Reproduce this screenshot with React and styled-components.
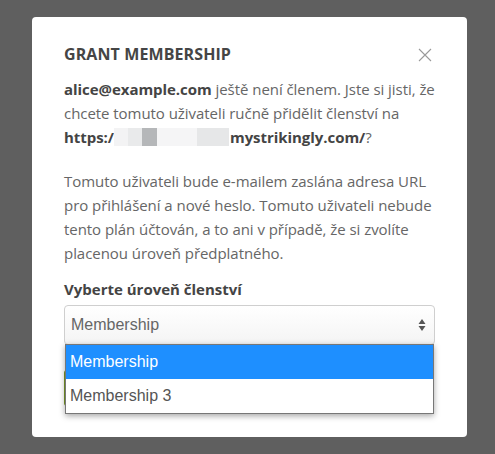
import React, { Component } from 'react';
import styled, { createGlobalStyle } from 'styled-components';

const GlobalStyle = createGlobalStyle`
  html, body {
    margin: 0;
    padding: 0;
    background: #5f5f5f;
  }
  body {
    font-family: "Open Sans", "Liberation Sans", sans-serif;
  }
`

class App extends Component {
  state = {
    options: [
      {id: 1, value: "Membership"},
      {id: 2, value: "Membership 3"}
    ],
    selected: "Membership"
  }

  render() {
    let {options, selected} = this.state

    return (
      <>
        <GlobalStyle />
        <Overlay>
          <Modal>
            <Header>
              <Title>Grant Membership</Title>
              <Close aria-label="close">
                <svg width="14" height="14" viewBox="0 0 14 14">
                  <path d="M1 1 L13 13 M13 1 L1 13" stroke="#9a9a9a" strokeWidth="1.1" fill="none" />
                </svg>
              </Close>
            </Header>
            <Text space={20}>
              <b>alice@example.com</b> ještě není členem. Jste si jisti, že chcete tomuto uživateli ručně přidělit členství na{' '}
              <b>https:/<Blur><i /><i /><i /><i /><i /></Blur>mystrikingly.com/</b>?
            </Text>
            <Text space={12}>
              Tomuto uživateli bude e-mailem zaslána adresa URL pro přihlášení a nové heslo. Tomuto uživateli nebude tento plán účtován, a to ani v případě, že si zvolíte placenou úroveň předplatného.
            </Text>
            <Label>Vyberte úroveň členství</Label>
            <Field>
              <Select>
                <span>{selected}</span>
                <Arrows>
                  <svg width="8" height="14" viewBox="0 0 8 14">
                    <path d="M4 1 L7.5 6 L0.5 6 Z M4 13 L7.5 8 L0.5 8 Z" fill="#555" />
                  </svg>
                </Arrows>
              </Select>
              <Button />
              <Menu>
                {
                  options.map(option => (
                    <Option key={option.id} active={option.value === selected}>{option.value}</Option>
                  ))
                }
              </Menu>
            </Field>
          </Modal>
        </Overlay>
      </>
    );
  }
}

const Overlay = styled.div`
  width: 495px;
  height: 454px;
  padding: 17px 28px 0 32px;
  box-sizing: border-box;
  overflow: hidden;
`

const Modal = styled.div`
  width: 435px;
  height: 420px;
  background: #fff;
  border-radius: 4px;
  padding: 25px 32px 0 32px;
  box-sizing: border-box;
`

const Header = styled.div`
  display: flex;
  justify-content: space-between;
  align-items: center;
  height: 24px;
  margin-bottom: 11px;
`

const Title = styled.h3`
  margin: 0;
  font-size: 16px;
  font-weight: 700;
  text-transform: uppercase;
  color: #454545;
  letter-spacing: 0.1px;
`

const Close = styled.div`
  display: flex;
  width: 14px;
  height: 14px;
  margin-right: 3px;
  margin-top: 2px;
`

const Text = styled.p`
  margin: 0 0 ${props => props.space}px 0;
  font-size: 15px;
  line-height: 24px;
  color: #666;
  letter-spacing: -0.05px;

  b {
    color: #444;
    font-weight: 700;
  }
`

const Blur = styled.span`
  display: inline-flex;
  vertical-align: -3px;
  height: 18px;
  margin: 0 1px 0 0;

  i {
    display: block;
    width: 14px;
    height: 18px;
    background: #f3f3f4;
  }
  i:nth-child(2) { background: #e9eaeb; width: 14px; }
  i:nth-child(3) { background: #b5b7b9; width: 15px; }
  i:nth-child(4) { background: #f5f5f6; width: 40px; }
  i:nth-child(5) { background: #e6e7e8; width: 32px; }
`

const Label = styled.div`
  font-size: 15px;
  font-weight: 700;
  color: #444;
  line-height: 24px;
  margin-bottom: 4px;
`

const Field = styled.div`
  position: relative;
`

const Select = styled.div`
  display: flex;
  align-items: center;
  justify-content: space-between;
  height: 40px;
  box-sizing: border-box;
  border: 1px solid #cfcfcf;
  border-radius: 4px;
  padding: 0 8px 0 6px;
  background: linear-gradient(#fff, #f4f4f4);
  font-family: "Liberation Sans", Arial, sans-serif;
  font-size: 16px;
  color: #666;
`

const Arrows = styled.span`
  display: flex;
`

const Button = styled.div`
  margin-top: 25px;
  width: 120px;
  height: 36px;
  background: #7a9a2a;
  border-radius: 3px;
`

const Menu = styled.ul`
  position: absolute;
  left: 1px;
  right: 1px;
  top: 39px;
  margin: 0;
  padding: 0;
  list-style: none;
  background: #fff;
  border: 1px solid #777;
  box-shadow: 0 2px 6px rgba(0, 0, 0, 0.35);
`

const Option = styled.li`
  height: 34px;
  display: flex;
  align-items: center;
  padding: 0 4px;
  font-family: "Liberation Sans", Arial, sans-serif;
  font-size: 16px;
  color: ${props => props.active ? '#fff' : '#555'};
  background: ${props => props.active ? '#1e8fff' : '#fff'};
`

export default App;
